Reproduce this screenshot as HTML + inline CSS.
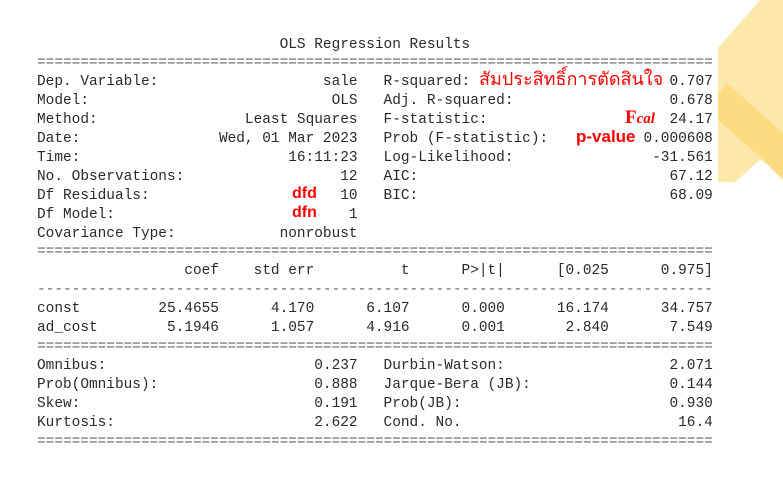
<!DOCTYPE html>
<html><head><meta charset="utf-8"><style>
html,body{margin:0;padding:0;background:#fff;width:783px;height:481px;overflow:hidden;position:relative}
pre{position:absolute;left:37px;top:35.5px;margin:0;font-family:"Liberation Mono",monospace;font-size:14.45px;line-height:18.9px;color:#2a2a2a}
.eq{color:#666;letter-spacing:0}
.r{position:absolute;color:#f00;font-weight:bold;font-family:"Liberation Sans",sans-serif;background:#fff;line-height:1}
</style></head><body>
<svg width="783" height="481" style="position:absolute;left:0;top:0">
<polygon points="783,0 760,0 718,48 718,182 735,182 760,160 783,173" fill="#fde8ac"/>
<polygon points="727,83 718,95 718,120 760,157 783,180 783,133" fill="#fcdc80"/>
</svg>
<pre>                            OLS Regression Results
<span class="eq">==============================================================================</span>
Dep. Variable:                   sale   R-squared:                       0.707
Model:                            OLS   Adj. R-squared:                  0.678
Method:                 Least Squares   F-statistic:                     24.17
Date:                Wed, 01 Mar 2023   Prob (F-statistic):           0.000608
Time:                        16:11:23   Log-Likelihood:                -31.561
No. Observations:                  12   AIC:                             67.12
Df Residuals:                      10   BIC:                             68.09
Df Model:                           1
Covariance Type:            nonrobust
<span class="eq">==============================================================================</span>
                 coef    std err          t      P>|t|      [0.025      0.975]
<span class="eq">------------------------------------------------------------------------------</span>
const         25.4655      4.170      6.107      0.000      16.174      34.757
ad_cost        5.1946      1.057      4.916      0.001       2.840       7.549
<span class="eq">==============================================================================</span>
Omnibus:                        0.237   Durbin-Watson:                   2.071
Prob(Omnibus):                  0.888   Jarque-Bera (JB):                0.144
Skew:                           0.191   Prob(JB):                        0.930
Kurtosis:                       2.622   Cond. No.                         16.4
<span class="eq">==============================================================================</span></pre>
<div class="r" style="left:292px;top:186px;font-size:16px">dfd</div>
<div class="r" style="left:292px;top:205px;font-size:16px">dfn</div>
<div class="r" style="left:479px;top:70px;font-size:18px;font-weight:normal;font-family:'Liberation Sans','Noto Sans CJK SC',sans-serif;background:none">สัมประสิทธิ์การตัดสินใจ</div>
<div class="r" style="left:625px;top:108px;font-size:19px;font-family:'Liberation Serif',serif;background:none">F<i style="font-size:15px">cal</i></div>
<div class="r" style="left:576px;top:128px;font-size:17px;background:none">p-value</div>
</body></html>
